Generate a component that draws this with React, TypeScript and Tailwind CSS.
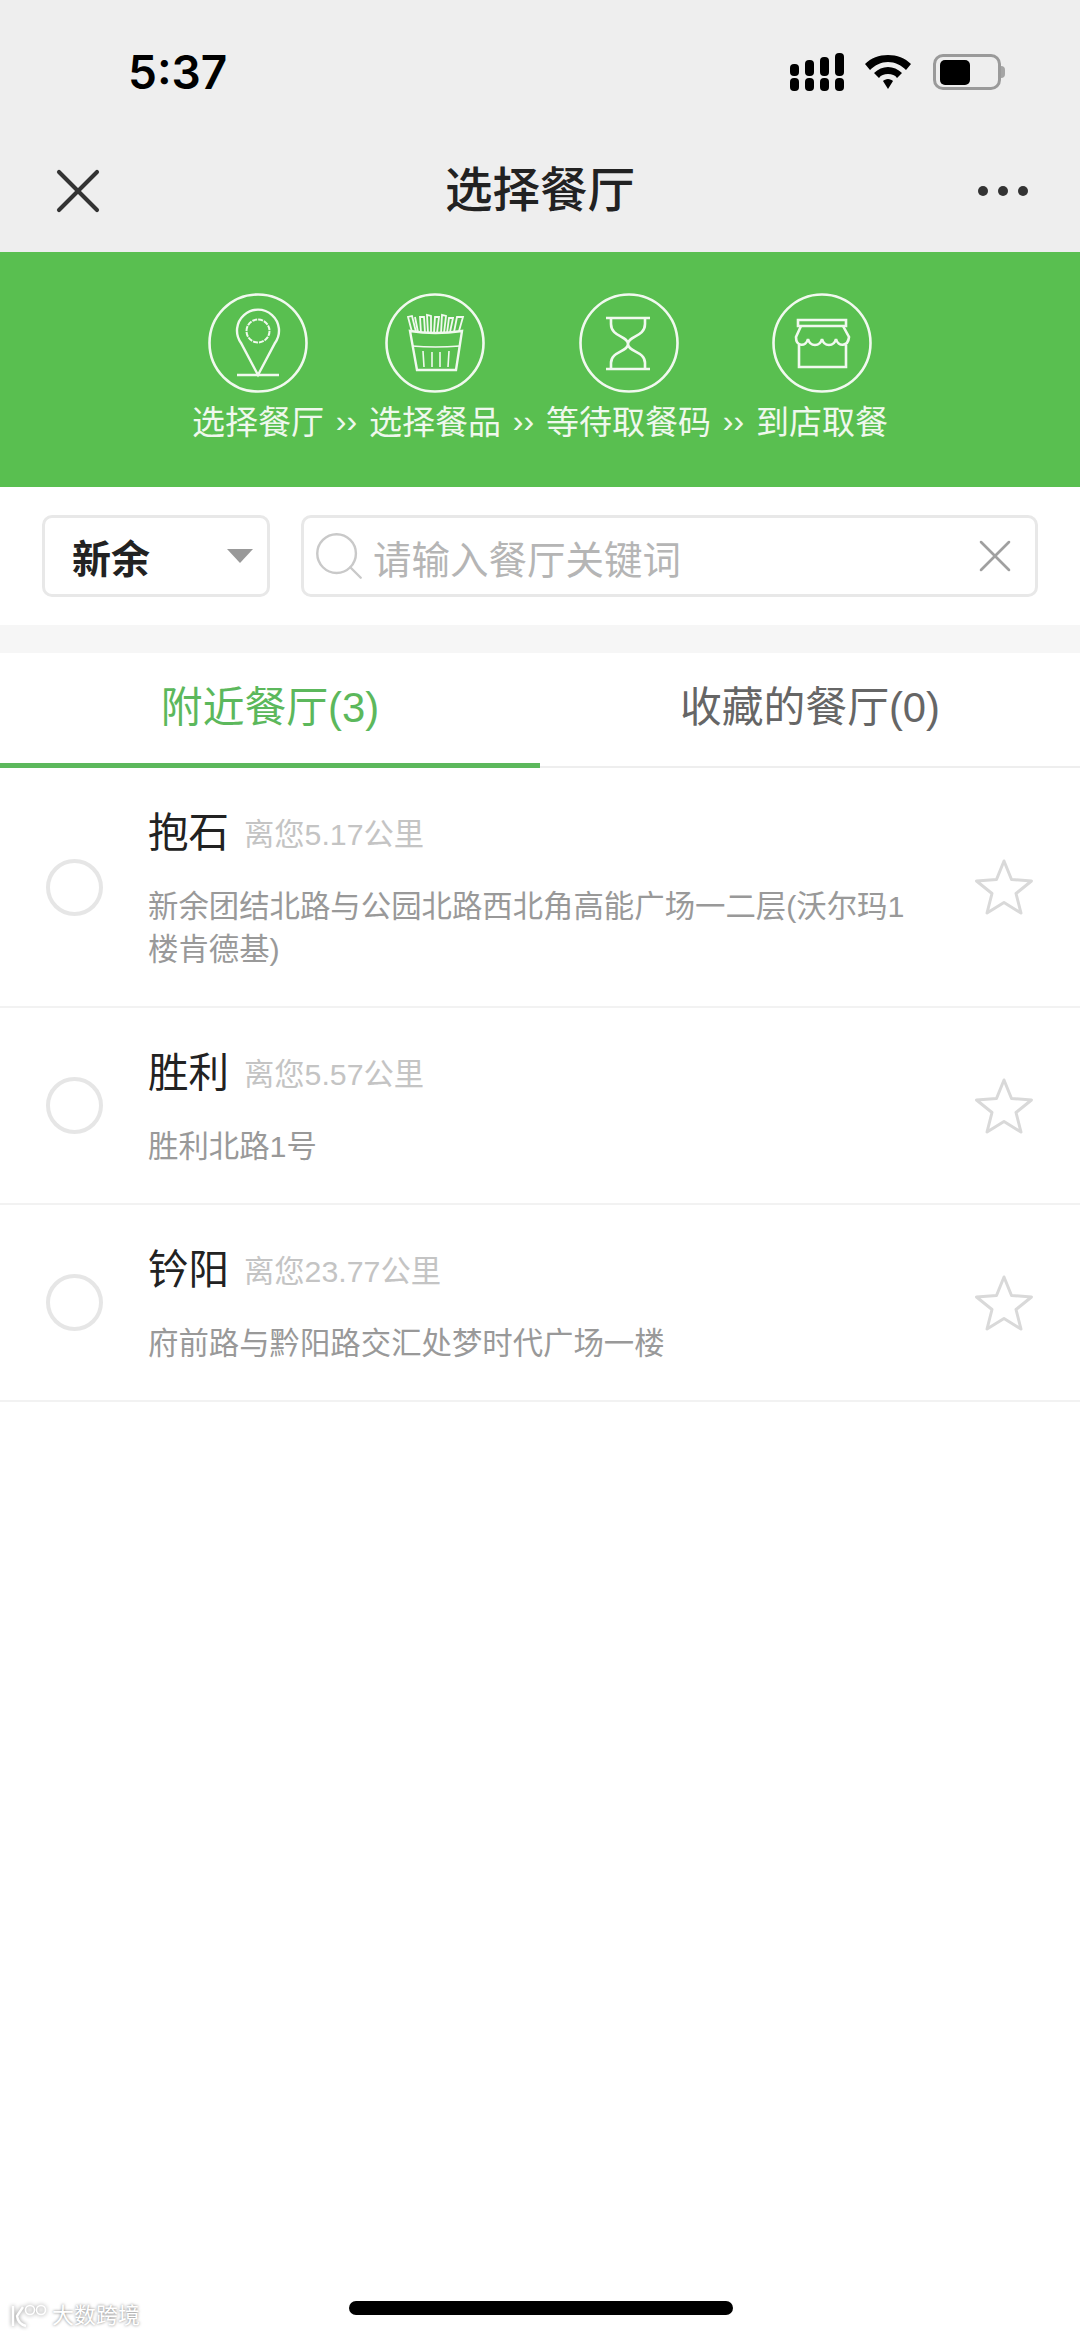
import { Search, X } from 'lucide-react';

const font = { sans: 'font-["Liberation_Sans","Noto_Sans_CJK_SC",sans-serif]' };

function Circle({ children }: { children: React.ReactNode }) {
  return (
    <svg width="100" height="100" viewBox="0 0 100 100" fill="none" stroke="#f1f9ef" strokeWidth="2.4">
      <circle cx="50" cy="50" r="48.5" strokeWidth="2.6" />
      {children}
    </svg>
  );
}

function PinIcon() {
  return (
    <Circle>
      <path d="M50 82 L33 50 A21 21 0 1 1 67 50 Z" />
      <circle cx="50" cy="38" r="11.5" strokeDasharray="5 1" strokeWidth="2" />
      <path d="M29 82 H71" />
    </Circle>
  );
}

function FriesIcon() {
  return (
    <Circle>
      <path d="M25 38 Q50 42 77 38 L71 77 H32 Z" />
      <path d="M27 53 Q50 55 75 53" strokeWidth="1.6" />
      <path d="M38 58 L39 74 M47 59 V74 M55 59 V74 M64 58 L63 74" strokeWidth="1.6" />
      <path d="M27 39 L23 24 L27 23 L31 39 M33 39 L30 24 M36 40 L35 24 L39 24 L40 40 M43 40 L42 22 L46 23 L46 40 M49 40 L50 24 L54 24 L52 40 M56 40 L57 22 L61 23 L59 40 M62 40 L64 25 L68 25 L65 39 M69 39 L72 24 L78 24 L74 38" strokeWidth="1.8" />
    </Circle>
  );
}

function HourglassIcon() {
  return (
    <Circle>
      <path d="M27 25 H71 M27 76 H71" strokeWidth="2.6" />
      <path d="M32 25 V31 C32 44 49 43 49 51 C49 59 32 58 32 70 V76 M66 25 V31 C66 44 49 43 49 51 C49 59 66 58 66 70 V76" strokeWidth="2.6" />
    </Circle>
  );
}

function StoreIcon() {
  return (
    <Circle>
      <path d="M26 27 H74 V33 H26 Z" strokeWidth="2.6" />
      <path d="M29 33 L24 44 C24 54 34 54 36 46 C38 54 48 54 50 46 C52 54 62 54 64 46 C66 54 76 54 77 44 L71 33" strokeWidth="2.6" />
      <path d="M27 52 V74 H74 V52" strokeWidth="2.6" />
    </Circle>
  );
}

function Step({ label, icon }: { label: string; icon: React.ReactNode }) {
  return (
    <div className="flex flex-col items-center">
      {icon}
      <span className="mt-[7px] text-[33px] leading-[46px] text-[#eff8ed] whitespace-nowrap">{label}</span>
    </div>
  );
}

function Sep() {
  return <span className="w-[45px] pb-[2px] text-center text-[32px] leading-[46px] text-[#eff8ed]">››</span>;
}

function StatusIcons() {
  return (
    <div className="flex items-center">
      <svg width="54" height="38" viewBox="0 0 54 38" fill="#000">
        <rect x="0" y="25" width="9" height="13" rx="4" />
        <rect x="15" y="25" width="9" height="13" rx="4" />
        <rect x="30" y="25" width="9" height="13" rx="4" />
        <rect x="45" y="25" width="9" height="13" rx="4" />
        <rect x="0" y="11" width="9" height="12" rx="4" />
        <rect x="15" y="7" width="9" height="16" rx="4" />
        <rect x="30" y="4" width="9" height="19" rx="4" />
        <rect x="45" y="0" width="9" height="23" rx="4" />
      </svg>
      <svg className="ml-[21px]" width="46" height="34" viewBox="0 0 46 34" fill="#000">
        <path d="M23 0 C32 0 40 3 46 9 L41 15 C36 10 30 7 23 7 C16 7 10 10 5 15 L0 9 C6 3 14 0 23 0 Z" />
        <path d="M23 12 C28 12 33 14 37 18 L32 23 C30 20 27 19 23 19 C19 19 16 20 14 23 L9 18 C13 14 18 12 23 12 Z" />
        <path d="M23 24 C25 24 27 25 28 26 L23 34 L18 26 C19 25 21 24 23 24 Z" />
      </svg>
      <div className="ml-[22px] flex items-center">
        <div className="flex h-[36px] w-[68px] items-center rounded-[10px] border-[3px] border-[#9a9a9a] pl-[4px]">
          <div className="h-[25px] w-[30px] rounded-[5px] bg-black" />
        </div>
        <div className="h-[12px] w-[4px] rounded-r-full bg-[#a5a5a5]" />
      </div>
    </div>
  );
}

const rows = [
  { name: '抱石', dist: '离您5.17公里', addr: '新余团结北路与公园北路西北角高能广场一二层(沃尔玛1楼肯德基)' },
  { name: '胜利', dist: '离您5.57公里', addr: '胜利北路1号' },
  { name: '钤阳', dist: '离您23.77公里', addr: '府前路与黔阳路交汇处梦时代广场一楼' },
];

function Row({ name, dist, addr }: { name: string; dist: string; addr: string }) {
  return (
    <div className="flex items-center border-b-2 border-[#f2f2f2] pl-[46px] pr-[46px]">
      <div className="h-[57px] w-[57px] shrink-0 rounded-full border-[4px] border-[#e6e6e6]" />
      <div className="ml-[45px] w-[770px] pt-[37px] pb-[35px]">
        <div className="flex items-center">
          <span className="text-[40.5px] leading-[56px] text-[#222]">{name}</span>
          <span className="ml-[15px] pt-[4px] text-[30.3px] leading-[40px] text-[#c4c4c4]">{dist}</span>
        </div>
        <p className="mt-[24px] text-[30.4px] leading-[43px] text-[#999]">{addr}</p>
      </div>
      <svg className="ml-auto shrink-0" width="60" height="58" viewBox="0 0 60 58" fill="none" stroke="#d9d9d9" strokeWidth="3" strokeLinejoin="round">
        <path d="M30 3 L37.5 21.5 L57.5 23 L42 35.5 L47 55 L30 44.5 L13 55 L18 35.5 L2.5 23 L22.5 21.5 Z" />
      </svg>
    </div>
  );
}

export default function App() {
  return (
    <div className={`relative min-h-[2337px] w-[1080px] bg-white ${font.sans}`}>
      <header className="bg-[#eeeeee]">
        <div className="flex h-[130px] items-center justify-between pt-[14px] pl-[128px] pr-[75px]">
          <span className="font-['Inter',sans-serif] text-[46px] font-semibold leading-none text-black">5:37</span>
          <StatusIcons />
        </div>
        <div className="relative flex h-[122px] items-center justify-center">
          <X className="absolute left-[40px] top-[23px]" size={76} strokeWidth={1.3} color="#333" />
          <span className="text-[47.5px] font-medium leading-none text-[#222]">选择餐厅</span>
          <div className="absolute right-[52px] top-[56px] flex gap-[10px]">
            <i className="h-[10px] w-[10px] rounded-full bg-[#333]" />
            <i className="h-[10px] w-[10px] rounded-full bg-[#333]" />
            <i className="h-[10px] w-[10px] rounded-full bg-[#333]" />
          </div>
        </div>
      </header>

      <section className="flex h-[235px] items-end justify-center bg-[#59bf50] pb-[41px]">
        <Step label="选择餐厅" icon={<PinIcon />} />
        <Sep />
        <Step label="选择餐品" icon={<FriesIcon />} />
        <Sep />
        <Step label="等待取餐码" icon={<HourglassIcon />} />
        <Sep />
        <Step label="到店取餐" icon={<StoreIcon />} />
      </section>

      <div className="flex gap-[31px] py-[28px] pl-[42px] pr-[42px]">
        <div className="flex h-[82px] w-[228px] items-center justify-between rounded-[10px] border-[3px] border-[#e8e8e8] pl-[27px] pr-[14px]">
          <span className="pt-[7px] text-[39px] font-bold leading-none text-[#222]">新余</span>
          <span className="h-0 w-0 border-x-[13px] border-t-[14px] border-x-transparent border-t-[#999]" />
        </div>
        <div className="flex h-[82px] flex-1 items-center rounded-[10px] border-[3px] border-[#e8e8e8] pl-[6px] pr-[12px]">
          <Search size={58} strokeWidth={1} color="#c9c9c9" />
          <span className="ml-[5px] flex-1 pt-[10px] text-[38.5px] leading-none text-[#b5b5b5]">请输入餐厅关键词</span>
          <X size={56} strokeWidth={1.1} color="#a0a0a0" />
        </div>
      </div>

      <div className="h-[28px] bg-[#f6f6f6]" />

      <div className="flex h-[115px]">
        <div className="flex flex-1 items-center justify-center border-b-[5px] border-[#5cb85c] text-[41.8px] leading-none text-[#5cb85c]">
          附近餐厅(3)
        </div>
        <div className="flex flex-1 items-center justify-center border-b-[2px] border-[#eeeeee] pb-[3px] text-[41.8px] leading-none text-[#666]">
          收藏的餐厅(0)
        </div>
      </div>

      {rows.map((r) => (
        <Row key={r.name} {...r} />
      ))}

      {/* watermark */}
      <div className="absolute bottom-[9px] left-[10px] flex items-center gap-[4px]">
        <svg width="38" height="24" viewBox="0 0 38 24" fill="none" stroke="#fff" strokeWidth="2.4" className="drop-shadow-[0_0_2px_#888]">
          <path d="M3 2 V22 M13 3 L7 12 Q8 20 16 22" />
          <circle cx="20" cy="6" r="4.5" strokeWidth="1.6" />
          <circle cx="31" cy="6" r="4.5" strokeWidth="1.6" />
        </svg>
        <span className="text-[22px] leading-none text-white [text-shadow:0_0_3px_#777]">大数跨境</span>
      </div>
      {/* home indicator */}
      <div className="absolute bottom-[22px] left-[349px] h-[14px] w-[384px] rounded-full bg-black" />
    </div>
  );
}
